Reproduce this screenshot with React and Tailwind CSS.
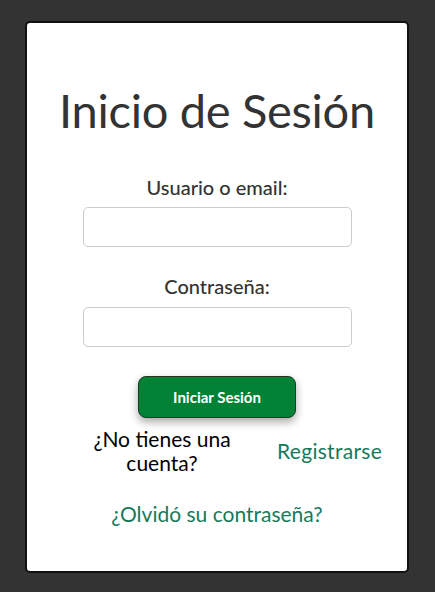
export default function App() {
  return (
    <div className="min-h-[592px] w-[435px] bg-[#333333] pt-[21px] pb-[19px] px-[25px] font-['Lato',sans-serif]">
      <div className="h-[552px] w-[384px] bg-white border-2 border-[#111] rounded-[5px] flex flex-col items-center pt-[59px]">
        <h1 className="text-[47px] leading-[56px] text-[#333] tracking-[-0.3px]">Inicio de Sesión</h1>

        <label className="mt-[36px] text-[20px] leading-[26px] text-[#333] font-medium">Usuario o email:</label>
        <input className="mt-[7px] w-[269px] h-[40px] border border-[#cccccc] rounded-[5px] outline-none" />

        <label className="mt-[26px] text-[20px] leading-[26px] text-[#333] font-medium">Contraseña:</label>
        <input type="password" className="mt-[8px] w-[269px] h-[40px] border border-[#cccccc] rounded-[5px] outline-none" />

        <button className="mt-[29px] w-[158px] h-[42px] bg-[#008236] border border-[#1c3a26] rounded-[8px] text-white text-[15px] font-bold shadow-[0_4px_8px_rgba(0,0,0,0.35)]">
          Iniciar Sesión
        </button>

        <div className="mt-[9px] w-full flex items-center">
          <p className="w-[270px] text-center text-[21px] leading-[24px] text-black">
            ¿No tienes una<br />cuenta?
          </p>
          <a className="text-[21px] leading-[24px] text-[#167a5a] -ml-[20px] tracking-[0.3px]">Registrarse</a>
        </div>

        <a className="mt-[27px] text-[21px] leading-[24px] text-[#167a5a]">¿Olvidó su contraseña?</a>
      </div>
    </div>
  )
}
